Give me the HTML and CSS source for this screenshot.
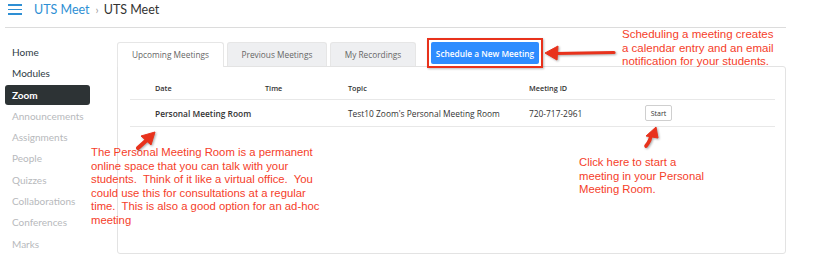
FILE: index.html
```html
<!DOCTYPE html>
<html lang="en">
<head>
    <meta charset="UTF-8">
    <title>UTS Meet</title>
    <link rel="stylesheet" href="styles.css">
</head>
<body>
<header class="topbar">
    <span class="burger"><i></i><i></i><i></i></span>
    <a class="crumb" href="#">UTS Meet</a>
    <span class="sep">›</span>
    <span class="crumb-current">UTS Meet</span>
</header>
<div class="layout">
    <nav class="sidebar">
        <a href="#">Home</a>
        <a href="#">Modules</a>
        <a href="#" class="active">Zoom</a>
        <a href="#" class="off">Announcements</a>
        <a href="#" class="off">Assignments</a>
        <a href="#" class="off">People</a>
        <a href="#" class="off">Quizzes</a>
        <a href="#" class="off">Collaborations</a>
        <a href="#" class="off">Conferences</a>
        <a href="#" class="off">Marks</a>
    </nav>
    <main class="main">
        <div class="tabs">
            <span class="tab current">Upcoming Meetings</span>
            <span class="tab">Previous Meetings</span>
            <span class="tab">My Recordings</span>
            <span class="highlight"><button class="schedule">Schedule a New Meeting</button></span>
        </div>
        <div class="panel">
            <table class="meetings">
                <thead>
                <tr>
                    <th class="c-date">Date</th>
                    <th class="c-time">Time</th>
                    <th class="c-topic">Topic</th>
                    <th class="c-id">Meeting ID</th>
                    <th></th>
                </tr>
                </thead>
                <tbody>
                <tr>
                    <td class="pmr">Personal Meeting Room</td>
                    <td></td>
                    <td>Test10 Zoom's Personal Meeting Room</td>
                    <td>720-717-2961</td>
                    <td><button class="start">Start</button></td>
                </tr>
                </tbody>
            </table>
        </div>
    </main>
</div>

<!-- annotations drawn over the screenshot -->
<p class="note note-schedule">Scheduling a meeting creates<br>a calendar entry and an email<br>notification for your students.</p>
<p class="note note-pmr">The Personal Meeting Room is a permanent<br>online space that you can talk with your<br>students.&nbsp; Think of it like a virtual office.&nbsp; You<br>could use this for consultations at a regular<br>time.&nbsp; This is also a good option for an ad-hoc<br>meeting</p>
<p class="note note-start">Click here to start a<br>meeting in your Personal<br>Meeting Room.</p>
<svg class="arrows" width="825" height="263" viewBox="0 0 825 263">
    <g fill="#e8321c" stroke="#e8321c" stroke-linejoin="round">
        <line x1="614" y1="52.5" x2="556" y2="53.5" stroke-width="3.2" stroke-linecap="round"/>
        <polygon points="545,53 558,46 557,60" stroke-width="1"/>
        <line x1="138" y1="148" x2="148" y2="139" stroke-width="4" stroke-linecap="round"/>
        <polygon points="155,132 141,136 151,145" stroke-width="1"/>
        <path d="M646 146 Q651 140 651 134" fill="none" stroke-width="3.6" stroke-linecap="round"/>
        <polygon points="656,127 646,136 658,138" stroke-width="1"/>
    </g>
</svg>
</body>
</html>
```

FILE: styles.css
```css
body {
    margin: 0;
    background: #fff;
    font-family: Lato, "Open Sans", sans-serif;
    position: relative;
    width: 825px;
    height: 263px;
    overflow: hidden;
}

.topbar {
    display: flex; align-items: center;
    height: 27px;
    margin: 0 39px 0 5px;
    padding-left: 3px;
    border-bottom: 1px solid #dcdcdc;
    font-size: 12.5px;
}
.burger { display: flex; flex-direction: column; gap: 3px; width: 14px; margin-right: 12px; margin-top: -8px; }
.burger i { display: block; height: 1.5px; background: #2e8fd4; }
.crumb { color: #2e8fd4; text-decoration: none; margin-top: -8px; }
.sep { color: #999; margin: -8px 5px 0 6px; font-size: 11px; }
.crumb-current { color: #333; margin-top: -8px; }

.layout { display: flex; }

.sidebar {
    width: 85px;
    margin-left: 5px;
    padding-top: 14px;
    display: flex; flex-direction: column;
}
.sidebar a {
    display: block;
    height: 21.3px; line-height: 21.3px;
    padding-left: 7px;
    font-size: 10px;
    color: #2d3b45;
    text-decoration: none;
    border-radius: 3px;
    white-space: nowrap;
}
.sidebar a.active { background: #2d3335; color: #fff; font-weight: bold; height: 20px; line-height: 20px; margin: 0 0 1.3px; }
.sidebar a.off { color: #b7b9bc; }

.main { margin-left: 27px; padding-top: 14px; width: 669px; font-family: "Open Sans", sans-serif; }

.tabs { display: flex; align-items: flex-start; height: 25px; position: relative; z-index: 1; }
.tab {
    box-sizing: border-box;
    height: 24px; line-height: 23px;
    margin-right: 3px;
    font-size: 8.3px;
    white-space: nowrap;
    text-align: center;
    color: #666;
    background: #eeeff1;
    border: 1px solid #e6e6e6; border-bottom: none;
    border-radius: 3px 3px 0 0;
}
.tab:nth-child(1) { width: 107px; }
.tab:nth-child(2) { width: 100px; }
.tab:nth-child(3) { width: 86px; }
.tab.current { background: #fff; height: 25px; }

.highlight {
    margin: -4px 0 0 8px;
    padding: 2px;
    border: 2px solid #e8321c;
    box-shadow: 1px 1px 2px #0004;
}
.schedule {
    display: block;
    width: 108px; height: 22px;
    padding: 0;
    border: none; border-radius: 2px;
    background: #2d8cff;
    color: #fff;
    white-space: nowrap;
    font-family: "Open Sans", sans-serif;
    font-size: 8.3px; font-weight: 600;
}

.panel {
    height: 176px;
    border: 1px solid #e3e3e3;
    border-radius: 0 3px 3px 3px;
    margin-top: -1px;
    padding: 10px 12px 0;
}
.meetings { width: 645px; border-collapse: collapse; font-size: 8.4px; color: #333; }
.meetings th {
    text-align: left; font-size: 7.3px; font-weight: 600;
    height: 22px; padding: 0;
    border-bottom: 1px solid #e8e8e8;
}
.meetings td { height: 26px; padding: 0; border-bottom: 1px solid #e8e8e8; }
.meetings .c-date { width: 110px; padding-left: 25px; }
.meetings .c-time { width: 83px; }
.meetings .c-topic { width: 181px; }
.meetings .c-id { width: 116px; }
.meetings td.pmr { padding-left: 25px; font-weight: 600; }
.start {
    width: 27px; height: 16px; padding: 0;
    background: #fff;
    border: 1px solid #cfcfcf; border-radius: 2px;
    font-family: "Open Sans", sans-serif; font-size: 7px; color: #333;
}

.note {
    position: absolute; margin: 0;
    font-family: "Liberation Sans", Arial, sans-serif;
    font-size: 11.3px; line-height: 13.6px;
    color: #f5402a;
}
.note-schedule { left: 622px; top: 28px; font-size: 11.5px; }
.note-pmr { left: 91px; top: 146px; }
.note-start { left: 579px; top: 156px; }

.arrows { position: absolute; left: 0; top: 0; pointer-events: none; filter: drop-shadow(1px 1px 1px #0005); }
```
